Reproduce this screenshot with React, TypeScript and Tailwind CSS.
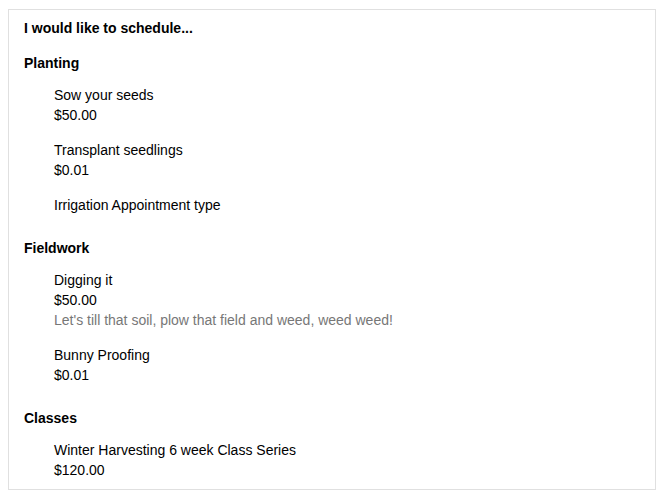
import React from "react";

type Item = { name: string; price?: string; desc?: string };
type Section = { title: string; items: Item[] };

const sections: Section[] = [
  {
    title: "Planting",
    items: [
      { name: "Sow your seeds", price: "$50.00" },
      { name: "Transplant seedlings", price: "$0.01" },
      { name: "Irrigation Appointment type" },
    ],
  },
  {
    title: "Fieldwork",
    items: [
      {
        name: "Digging it",
        price: "$50.00",
        desc: "Let's till that soil, plow that field and weed, weed weed!",
      },
      { name: "Bunny Proofing", price: "$0.01" },
    ],
  },
  {
    title: "Classes",
    items: [{ name: "Winter Harvesting 6 week Class Series", price: "$120.00" }],
  },
];

export default function App() {
  return (
    <div
      className="bg-white text-[14px] leading-5 text-black"
      style={{ fontFamily: '"Liberation Sans", Arial, sans-serif' }}
    >
      <div className="ml-2 mt-[9px] w-[648px] border border-[#e0e0e0] pl-[15px] pr-[15px] pt-2 pb-[9px]">
        <div className="font-bold">I would like to schedule...</div>
        <div className="mt-[15px] flex flex-col gap-[23px]">
          {sections.map((s) => (
            <div key={s.title}>
              <div className="font-bold">{s.title}</div>
              <div className="mt-3 flex flex-col gap-[15px] pl-[30px]">
                {s.items.map((it) => (
                  <div key={it.name}>
                    <div>{it.name}</div>
                    {it.price && <div>{it.price}</div>}
                    {it.desc && <div className="text-[#777777]">{it.desc}</div>}
                  </div>
                ))}
              </div>
            </div>
          ))}
        </div>
      </div>
    </div>
  );
}
